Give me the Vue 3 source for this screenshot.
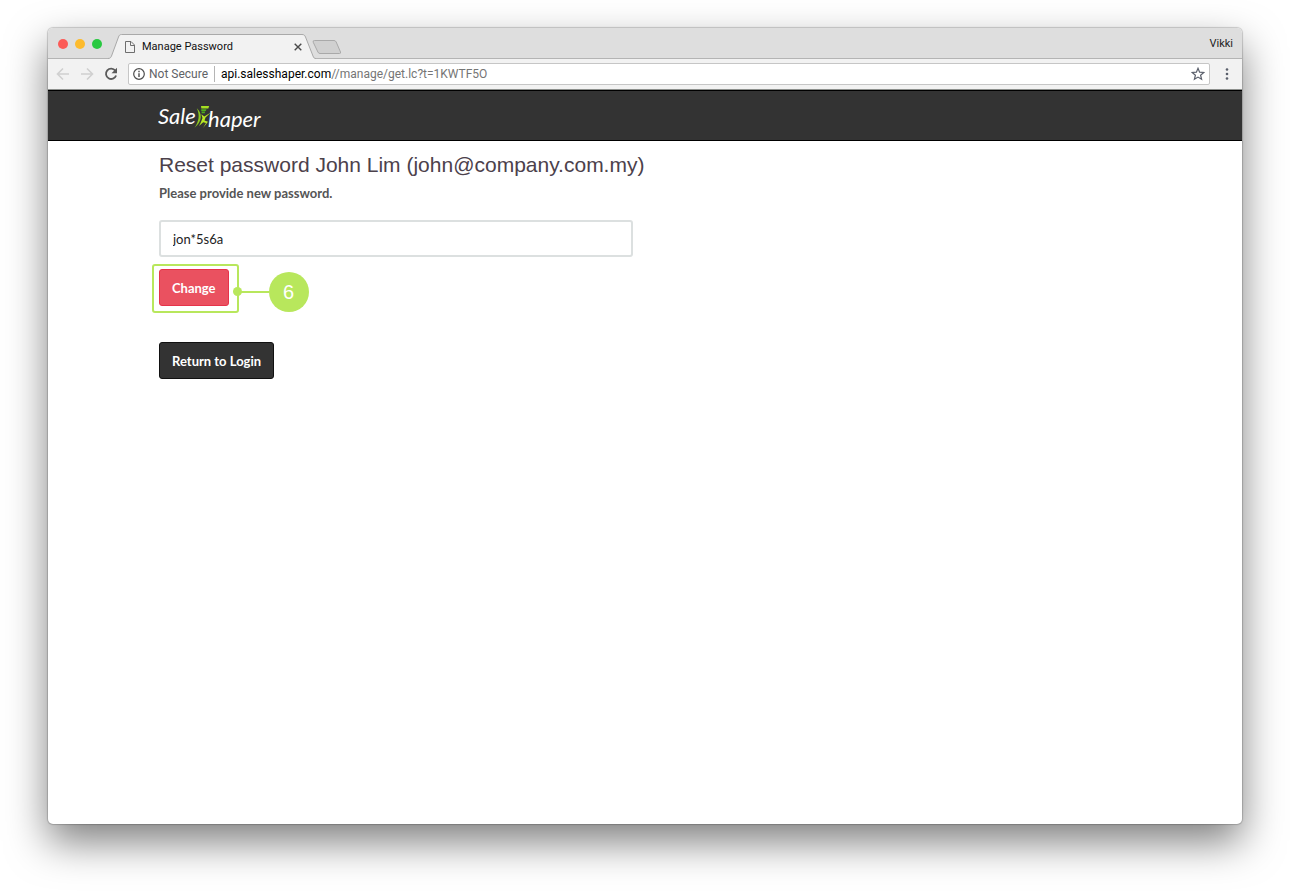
<template>
  <div class="desktop">
    <div class="window">
      <!-- Title bar: window controls, tab, profile -->
      <header class="title-bar">
        <div class="window-controls">
          <button
            v-for="control in controls"
            :key="control"
            type="button"
            class="control"
            :class="control"
            :aria-label="control"
          ></button>
        </div>
        <div class="tab">
          <svg class="tab-shape" viewBox="0 0 208 25" aria-hidden="true">
            <path d="M0 24.5C2.5 24.5 3 23 3.5 22L10.500 3C11 1.300 12 .5 13.500 .5H194C196 .5 196.800 1.300 197.500 3L205 22C205.700 24 206.500 24.500 208 24.500V25H0Z" fill="#f2f2f2" />
            <path d="M0 24.500C2.500 24.500 3 23 3.500 22L10.500 3C11 1.300 12 .5 13.500 .5H194C196 .5 196.800 1.300 197.500 3L205 22C205.700 24 206.500 24.500 208 24.500" fill="none" stroke="#a9a9a9" />
          </svg>
          <svg class="page-icon" viewBox="0 0 10 12" fill="none" stroke="#6e6e6e" aria-hidden="true">
            <path d="M.5 .5H6L9.500 4V11.500H.5ZM5.500 .5V4.500H9.500" />
          </svg>
          <span class="tab-title">Manage Password</span>
          <button type="button" class="tab-close" aria-label="Close tab">
            <svg viewBox="0 0 8 8" stroke="#4a4a4a" stroke-width="1.4"><path d="M.7 .7L7.300 7.300M7.300 .7L.7 7.300" /></svg>
          </button>
        </div>
        <button type="button" class="new-tab" aria-label="New tab">
          <svg viewBox="0 0 30 15"><path d="M2.500 .5H22Q23.500 .5 24.200 2L28.500 12Q29 13.500 27.500 13.500H8Q6.500 13.500 5.900 12L1.200 2.200Q.6 .5 2.500 .5Z" fill="#d0d0d0" stroke="#a9a9a9" /></svg>
        </button>
        <span class="profile">Vikki</span>
      </header>

      <!-- Toolbar: navigation and address -->
      <div class="toolbar">
        <button type="button" class="tool" aria-label="Back">
          <svg viewBox="0 0 14 14" fill="none" stroke="#d0d0d0" stroke-width="1.6"><path d="M13 7H2M7 1.500L1.500 7L7 12.500" /></svg>
        </button>
        <button type="button" class="tool" aria-label="Forward">
          <svg viewBox="0 0 14 14" fill="none" stroke="#d0d0d0" stroke-width="1.6"><path d="M1 7H12M7 1.500L12.500 7L7 12.500" /></svg>
        </button>
        <button type="button" class="tool" aria-label="Reload">
          <svg viewBox="0 0 14 14"><path d="M11.300 3.600A5.200 5.200 0 1 0 12.100 8.500" fill="none" stroke="#5a5a5a" stroke-width="1.8" /><path d="M13 .8V6.300H7.500Z" fill="#5a5a5a" /></svg>
        </button>
        <div class="address-bar">
          <svg class="info-icon" viewBox="0 0 12 12" aria-hidden="true"><circle cx="6" cy="6" r="5.300" fill="none" stroke="#4d4d4d" stroke-width="1.2" /><path d="M6 5.200V9M6 2.800V4.200" stroke="#4d4d4d" stroke-width="1.400" /></svg>
          <span class="security">Not Secure</span>
          <span class="url"><b>api.salesshaper.com</b>//manage/get.lc?t=1KWTF5O</span>
          <button type="button" class="star" aria-label="Bookmark this page">
            <svg viewBox="0 0 14 14" fill="none" stroke="#5a5f6b" stroke-width="1.200"><path d="M7 1.300L8.600 5.200L12.800 5.500L9.600 8.200L10.600 12.300L7 10.100L3.400 12.300L4.400 8.200L1.200 5.500L5.400 5.200Z" /></svg>
          </button>
        </div>
        <button type="button" class="more" aria-label="Menu">
          <svg viewBox="0 0 4 12" fill="#5a5f6b"><circle cx="2" cy="1.500" r="1.300" /><circle cx="2" cy="6" r="1.300" /><circle cx="2" cy="10.500" r="1.300" /></svg>
        </button>
      </div>

      <!-- Site header -->
      <nav class="navbar">
        <a href="#" class="brand" aria-label="SalesShaper">
          <svg viewBox="0 0 106 30" aria-hidden="true">
            <text x="0" y="21" class="brand-text">Sale</text>
            <text x="50" y="24" class="brand-text">haper</text>
            <path d="M38.800 5.300C44.500 10 44.500 18.500 36.500 24.800C41 18.500 42 12 38.800 5.300Z" fill="#8cc91e" />
            <path d="M43 3H51.200L50.300 5.400H43.300Z" fill="#a6e022" />
            <path d="M43.200 6.200H48.500L47.800 7.900H43.300ZM43.500 8.500H47.200L46.700 10.300H43.700Z" fill="#4fae1c" />
            <path d="M52.800 9.600L46.300 13.500L43.300 11.300L44.500 15L42.800 19.500L41 23L45.200 19.300L48 20L45 25L50 18.800L46.500 17.400L47.500 14.600Z" fill="#b9e925" />
          </svg>
        </a>
      </nav>

      <main class="content">
        <h1>Reset password John Lim (john@company.com.my)</h1>
        <form @submit.prevent>
          <label for="password">Please provide new password.</label>
          <input id="password" v-model="password" type="text" autocomplete="off" />
          <div class="submit-row">
            <button type="submit" class="btn btn-change">Change</button>
            <div class="highlight">
              <span class="line"></span>
              <span class="step">6</span>
            </div>
          </div>
        </form>
        <button type="button" class="btn btn-return">Return to Login</button>
      </main>
    </div>
  </div>
</template>

<script setup>
import { ref } from 'vue'

const controls = ['close', 'minimize', 'maximize']
const password = ref('jon*5s6a')
</script>

<style>
body {
  margin: 0;
  background: #fff;
}
</style>

<style scoped>
* {
  box-sizing: border-box;
}

button {
  padding: 0;
  border: 0;
  background: none;
}

svg {
  display: block;
}

.desktop {
  display: flex;
  min-height: 100vh;
  padding: 28px 48px 68px;
  overflow: hidden;
  font-family: Roboto, "Liberation Sans", sans-serif;
}

.window {
  display: flex;
  flex: 1;
  flex-direction: column;
  min-width: 0;
  border-radius: 5px;
  background: #fff;
  box-shadow: 0 0 1px 1px rgba(0, 0, 0, 0.18), 0 18px 40px rgba(0, 0, 0, 0.5);
}

/* Title bar */
.title-bar {
  display: flex;
  align-items: flex-end;
  height: 31px;
  border-bottom: 1px solid #b4b4b4;
  border-radius: 5px 5px 0 0;
  background: #dedede;
}

.window-controls {
  display: flex;
  gap: 7px;
  padding: 0 6px 9px 10px;
}

.control {
  width: 10px;
  height: 10px;
  border-radius: 50%;
}

.close {
  background: #fc5b57;
}

.minimize {
  background: #fdbb2d;
}

.maximize {
  background: #29c941;
}

.tab {
  position: relative;
  display: flex;
  align-items: center;
  width: 208px;
  height: 25px;
  margin-bottom: -1px;
  padding: 0 14px 0 17px;
}

.tab-shape {
  position: absolute;
  inset: 0;
  width: 208px;
  height: 25px;
}

.page-icon {
  position: relative;
  width: 10px;
  height: 12px;
}

.tab-title {
  position: relative;
  flex: 1;
  padding-left: 7px;
  color: #111;
  font-size: 11px;
  line-height: 24px;
}

.tab-close {
  position: relative;
}

.tab-close svg {
  width: 8px;
  height: 8px;
}

.new-tab {
  margin: 0 auto 3px -4px;
}

.new-tab svg {
  width: 30px;
  height: 15px;
}

.profile {
  padding: 0 9px 7px 0;
  color: #222;
  font-size: 11px;
  line-height: 14px;
}

/* Toolbar */
.toolbar {
  display: flex;
  align-items: center;
  height: 31px;
  padding: 0 13px 0 8px;
  border-bottom: 1px solid #8c8f8c;
  background: #f2f2f2;
}

.tool {
  margin-right: 10px;
}

.tool svg {
  width: 14px;
  height: 14px;
}

.address-bar {
  display: flex;
  flex: 1;
  align-items: center;
  height: 22px;
  padding: 0 4px;
  border: 1px solid #c6c6c6;
  border-radius: 2px;
  background: #fff;
  font-size: 12px;
  line-height: 16px;
}

.info-icon {
  width: 12px;
  height: 12px;
}

.security {
  margin: 0 6px 0 4px;
  padding-right: 6px;
  border-right: 1px solid #b5b5b5;
  color: #5f6368;
}

.url {
  flex: 1;
  color: #757575;
}

.url b {
  color: #000;
  font-weight: 400;
}

.star svg {
  width: 14px;
  height: 14px;
}

.more {
  margin-left: 15px;
}

.more svg {
  width: 4px;
  height: 12px;
}

/* Site */
.navbar {
  height: 51px;
  padding: 12px 110px;
  border-top: 1px solid #000;
  border-bottom: 1px solid #000;
  background: #333;
}

.brand {
  display: inline-block;
}

.brand svg {
  width: 106px;
  height: 30px;
}

.brand-text {
  fill: #fff;
  font-family: Lato, sans-serif;
  font-size: 22px;
  font-style: italic;
}

.content {
  padding: 10px 111px;
  font-family: Lato, sans-serif;
  font-size: 13px;
}

h1 {
  margin: 0;
  color: #4c414b;
  font-family: "Liberation Sans", Arial, sans-serif;
  font-size: 21px;
  font-weight: 400;
  line-height: 28px;
}

label {
  display: block;
  margin-top: 4px;
  color: #555;
  font-weight: 700;
  line-height: 20px;
}

input {
  display: block;
  width: 100%;
  max-width: 474px;
  height: 37px;
  margin-top: 17px;
  padding: 0 12px;
  border: 2px solid #dce0e0;
  border-radius: 3px;
  color: #222;
  font: inherit;
}

.submit-row {
  position: relative;
  display: inline-block;
  margin-top: 12px;
}

.btn {
  display: block;
  height: 37px;
  padding: 0 12px;
  border: 1px solid;
  border-radius: 3px;
  color: #fff;
  font: inherit;
  font-weight: 700;
}

.btn-change {
  border-color: #e6334a;
  background: #ea5160;
}

.btn-return {
  margin-top: 36px;
  border-color: #111;
  background: #333;
}

/* Step marker drawn over the submit button */
.highlight {
  position: absolute;
  inset: -5px -10px -7px -7px;
  border: 2px solid #b8e75c;
  border-radius: 3px;
  pointer-events: none;
}

.line {
  position: absolute;
  top: 25px;
  left: 100%;
  width: 32px;
  height: 2px;
  background: #b8e75c;
}

.line::before {
  position: absolute;
  top: -4px;
  left: -4px;
  width: 9px;
  height: 9px;
  border-radius: 50%;
  background: #b8e75c;
  content: "";
}

.step {
  position: absolute;
  top: 6px;
  left: calc(100% + 32px);
  width: 40px;
  height: 40px;
  border-radius: 50%;
  background: #b8e75c;
  color: #fff;
  font-family: "Liberation Sans", Arial, sans-serif;
  font-size: 20px;
  line-height: 40px;
  text-align: center;
}
</style>
